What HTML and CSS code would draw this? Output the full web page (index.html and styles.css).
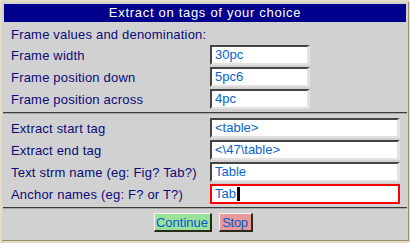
FILE: index.html
```html
<!DOCTYPE html>
<html lang="en">
<head>
	<meta charset="UTF-8">
	<title>Extract on tags of your choice</title>
	<link rel="stylesheet" href="styles.css">
</head>
<body>
	<div class="dialog">
		<div class="title-bar">Extract on tags of your choice</div>

		<div class="heading">Frame values and denomination:</div>
		<div class="form-grid">
			<label>Frame width</label>
			<div class="field field--short">30pc</div>
			<label>Frame position down</label>
			<div class="field field--short">5pc6</div>
			<label>Frame position across</label>
			<div class="field field--short">4pc</div>
		</div>

		<div class="separator"></div>

		<div class="form-grid form-grid--tags">
			<label>Extract start tag</label>
			<div class="field">&lt;table&gt;</div>
			<label>Extract end tag</label>
			<div class="field">&lt;\47\table&gt;</div>
			<label>Text strm name (eg: Fig? Tab?)</label>
			<div class="field">Table</div>
			<label>Anchor names (eg: F? or T?)</label>
			<div class="field field--active">Tab<span class="cursor"></span></div>
		</div>

		<div class="separator"></div>

		<div class="actions">
			<button class="btn btn--go">Continue</button>
			<button class="btn btn--stop">Stop</button>
		</div>
	</div>
</body>
</html>
```

FILE: styles.css
```css
html,
body {
	margin: 0;
	padding: 0;
	width: 410px;
	height: 243px;
	overflow: hidden;
}

body {
	background-color: #e6dcc6;
	font-family: 'Liberation Sans', Arial, sans-serif;
	font-size: 13px;
}

.dialog {
	margin: 2px 0 0 2px;
	width: 402px;
	padding: 2px;
	background-color: #d1d1d1;
	border-right: 1px solid #9c8c70;
	border-bottom: 1px solid #9c8c70;
}

.title-bar {
	height: 18px;
	line-height: 18px;
	background-color: #00008c;
	color: #fff;
	text-align: center;
	letter-spacing: 0.7px;
}

.heading {
	padding: 4px 0 1px 7px;
	line-height: 18px;
	color: #0a0a78;
	letter-spacing: 0.2px;
}

.form-grid {
	display: grid;
	grid-template-columns: 199px 100px;
	grid-auto-rows: 22px;
	padding-left: 7px;
}

.form-grid--tags {
	grid-template-columns: 199px 190px;
	margin-top: 4px;
}

.form-grid label {
	padding-top: 1px;
	line-height: 20px;
	color: #0a0a78;
	white-space: nowrap;
	letter-spacing: 0.2px;
}

.field {
	box-sizing: border-box;
	height: 20px;
	padding-left: 3px;
	line-height: 16px;
	background-color: #fff;
	color: #0664cc;
	border-style: solid;
	border-width: 2px 3px 2px 2px;
	border-color: #444 #e2e2e2 #e2e2e2 #444;
	white-space: nowrap;
}

.field--active {
	border: 2px solid #f00;
}

.cursor {
	display: inline-block;
	width: 3px;
	height: 14px;
	margin-left: 1px;
	vertical-align: -3px;
	background-color: #000;
}

.separator {
	margin: 1px -1px 0;
	height: 1px;
	background-color: #3a3a3a;
	border-bottom: 1px solid #a8a8a8;
}

.actions {
	display: flex;
	justify-content: center;
	gap: 7px;
	margin-top: 4px;
	padding: 0 4px 6px 0;
}

.btn {
	box-sizing: border-box;
	height: 19px;
	margin: 0;
	padding: 0;
	text-align: center;
	font-family: inherit;
	font-size: 13px;
	line-height: 15px;
	color: #0656d0;
	border-style: solid;
	border-width: 1px 2px 2px 1px;
	border-color: #f4f4f4 #2a2a1a #2a2a1a #f4f4f4;
}

.btn--go {
	width: 58px;
	background-color: #98e29a;
}

.btn--stop {
	width: 34px;
	letter-spacing: -0.3px;
	background-color: #e89a9a;
}
```
